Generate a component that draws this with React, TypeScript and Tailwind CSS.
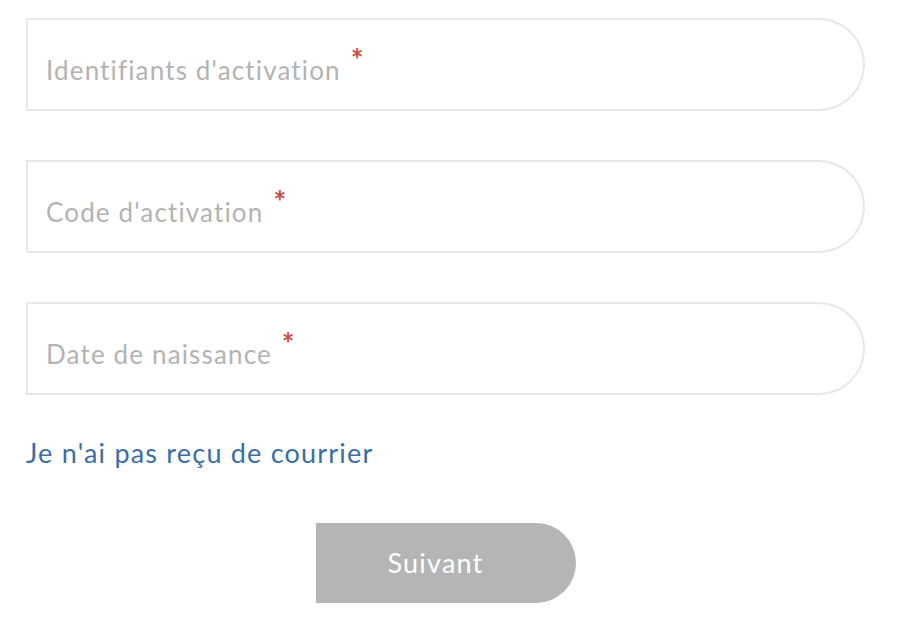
import React from "react";

const fields = ["Identifiants d'activation", "Code d'activation", "Date de naissance"];

const App = () => {
  return (
    <div
      className="w-[902px] h-[630px] bg-white pl-[26px] pt-[18px]"
      style={{ fontFamily: "Lato, 'Open Sans', sans-serif" }}
    >
      <div className="w-[839px] flex flex-col gap-[49px]">
        {fields.map((name) => (
          <div
            key={name}
            className="h-[93px] border-2 border-[#e8e8e8] rounded-l-[8px] rounded-r-full flex items-center pl-[18px] pt-[10px]"
          >
            <span className="text-[26px] tracking-[1.15px] text-[#b3b3b3] leading-none">{name}</span>
            <span className="text-[30px] font-bold text-[#cc4f48] leading-none ml-[10px] -mt-[22px]">*</span>
          </div>
        ))}
      </div>
      <a href="#" className="block mt-[44px] text-[27px] tracking-[1.2px] leading-none text-[#3a6ea5]">
        Je n'ai pas reçu de courrier
      </a>
      <div className="w-[839px] flex justify-center mt-[57px]">
        <button className="w-[260px] h-[80px] bg-[#b5b5b5] text-white text-[27px] tracking-[1.2px] rounded-l-[6px] rounded-r-full pr-[20px]">
          Suivant
        </button>
      </div>
    </div>
  );
};

export default App;
